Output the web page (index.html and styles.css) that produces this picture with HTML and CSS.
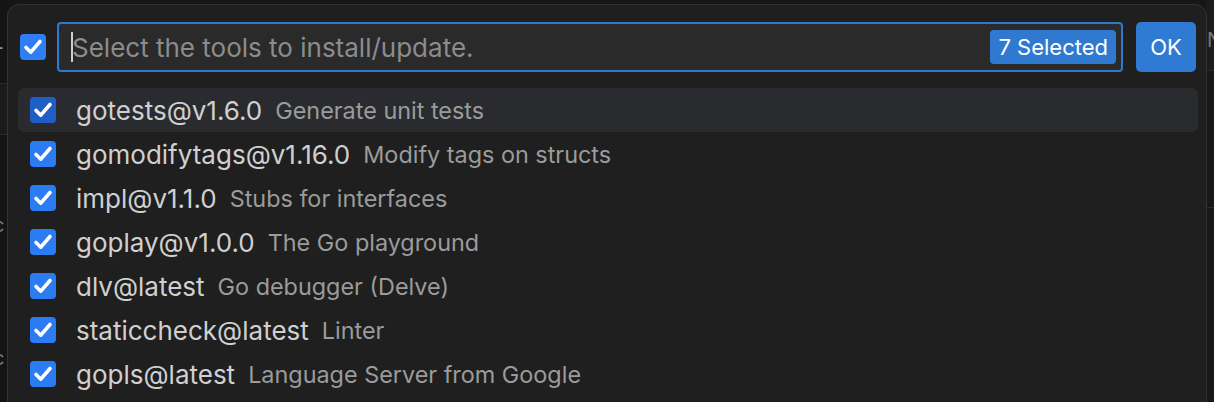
FILE: index.html
```html
<!DOCTYPE html>
<html>
<head>
<meta charset="utf-8">
<link rel="stylesheet" href="styles.css">
</head>
<body>
<div class="backdrop">
  <div class="strip left">
    <div class="l-top"><span class="glyph">L</span></div>
    <div class="l-band"></div>
    <div class="l-rest">
      <span class="glyph g1">c</span>
      <span class="glyph g2">c</span>
    </div>
  </div>
  <div class="strip-mid"></div>
  <div class="strip right">
    <div class="r-top"><span class="glyph">N</span></div>
    <div class="r-mid"></div>
    <div class="r-rest"></div>
  </div>
</div>

<div class="quick">
  <div class="header">
    <span class="cb cb-head"><svg viewBox="0 0 26 26"><path d="M6 13.5 L10.8 18.2 L20 7.5"/></svg></span>
    <div class="input">
      <span class="caret"></span>
      <span class="placeholder">Select the tools to install/update.</span>
      <span class="badge">7 Selected</span>
    </div>
    <button class="ok">OK</button>
  </div>
  <ul class="list">
    <li class="row focused"><span class="cb cb-focus"><svg viewBox="0 0 26 26"><path d="M6 13.5 L10.8 18.2 L20 7.5"/></svg></span><span class="label">gotests@v1.6.0</span><span class="desc">Generate unit tests</span></li>
    <li class="row"><span class="cb"><svg viewBox="0 0 26 26"><path d="M6 13.5 L10.8 18.2 L20 7.5"/></svg></span><span class="label">gomodifytags@v1.16.0</span><span class="desc">Modify tags on structs</span></li>
    <li class="row"><span class="cb"><svg viewBox="0 0 26 26"><path d="M6 13.5 L10.8 18.2 L20 7.5"/></svg></span><span class="label">impl@v1.1.0</span><span class="desc">Stubs for interfaces</span></li>
    <li class="row"><span class="cb"><svg viewBox="0 0 26 26"><path d="M6 13.5 L10.8 18.2 L20 7.5"/></svg></span><span class="label">goplay@v1.0.0</span><span class="desc">The Go playground</span></li>
    <li class="row"><span class="cb"><svg viewBox="0 0 26 26"><path d="M6 13.5 L10.8 18.2 L20 7.5"/></svg></span><span class="label">dlv@latest</span><span class="desc">Go debugger (Delve)</span></li>
    <li class="row"><span class="cb"><svg viewBox="0 0 26 26"><path d="M6 13.5 L10.8 18.2 L20 7.5"/></svg></span><span class="label">staticcheck@latest</span><span class="desc">Linter</span></li>
    <li class="row"><span class="cb"><svg viewBox="0 0 26 26"><path d="M6 13.5 L10.8 18.2 L20 7.5"/></svg></span><span class="label">gopls@latest</span><span class="desc">Language Server from Google</span></li>
  </ul>
</div>
</body>
</html>
```

FILE: styles.css
```css
* { box-sizing: border-box; }
html, body {
  margin: 0;
  padding: 0;
  width: 1214px;
  height: 402px;
  overflow: hidden;
  background: #161616;
  font-family: Inter, "Noto Sans", sans-serif;
}
.backdrop {
  display: flex;
  height: 402px;
}
.strip { width: 8px; display: flex; flex-direction: column; overflow: hidden; }
.strip-mid { flex: 1; }
.glyph {
  display: block;
  color: #8a8a8a;
  font-size: 20px;
  line-height: 20px;
}
.l-top { height: 84px; background: #141414; border-bottom: 1px solid #2c2c2c; padding-top: 32px; }
.l-top .glyph { margin-left: -8px; color: #999; }
.l-band { height: 51px; background: #1b1b1b; border-bottom: 1px solid #2c2c2c; }
.l-rest { flex: 1; background: #141414; }
.l-rest .glyph { color: #777; margin-left: -7px; }
.g1 { margin-top: 80px; }
.g2 { margin-top: 113px; }
.r-top { height: 71px; background: #1c1c1c; border-bottom: 1px solid #2c2c2c; padding-top: 30px; padding-left: 1px; }
.r-top .glyph { color: #777; }
.r-mid { height: 137px; background: #171717; border-bottom: 1px solid #2a2a2a; }
.r-rest { flex: 1; background: #171717; }

.quick {
  position: absolute;
  left: 7px;
  top: 4px;
  width: 1200px;
  height: 420px;
  background: #1f1f1f;
  border: 1px solid #333333;
  border-radius: 12px;
}
.header {
  display: flex;
  align-items: center;
  padding: 17px 10px 0 12px;
}
.cb {
  flex: none;
  width: 26px;
  height: 26px;
  border-radius: 4px;
  background: #2b7cf3;
  display: flex;
}
.cb svg { width: 26px; height: 26px; }
.cb path {
  fill: none;
  stroke: #ffffff;
  stroke-width: 3.6;
  stroke-linecap: round;
  stroke-linejoin: round;
}
.cb-head { background: #2f7ef6; }
.cb-focus { background: #1f5ec4; }
.input {
  flex: 1;
  margin-left: 11px;
  height: 50px;
  border: 2px solid #2d78d0;
  border-radius: 4px;
  background: #2a2a2a;
  display: flex;
  align-items: center;
  padding: 0 5px 0 12px;
}
.caret {
  width: 2px;
  height: 30px;
  background: #cfcfcf;
}
.placeholder {
  flex: 1;
  color: #8c8c8c;
  font-size: 26px;
  margin-left: -1px;
}
.badge {
  background: #2f79d1;
  color: #ffffff;
  font-size: 22px;
  height: 34px;
  line-height: 34px;
  padding: 0 8px;
  border-radius: 4px;
}
.ok {
  margin-left: 13px;
  width: 60px;
  height: 50px;
  border: none;
  border-radius: 5px;
  background: #2f7ad2;
  color: #ffffff;
  font-family: Inter, "Noto Sans", sans-serif;
  font-size: 22px;
  padding: 0;
}
.list {
  list-style: none;
  margin: 16px 8px 0 10px;
  padding: 0;
}
.row {
  display: flex;
  align-items: center;
  height: 44px;
  padding-left: 12px;
  border-radius: 6px;
}
.row.focused { background: #2a2b2e; }
.label {
  margin-left: 20px;
  color: #d0d0d0;
  font-size: 26px;
}
.desc {
  margin-left: 13px;
  color: #9b9b9b;
  font-size: 23.4px;
}
```
